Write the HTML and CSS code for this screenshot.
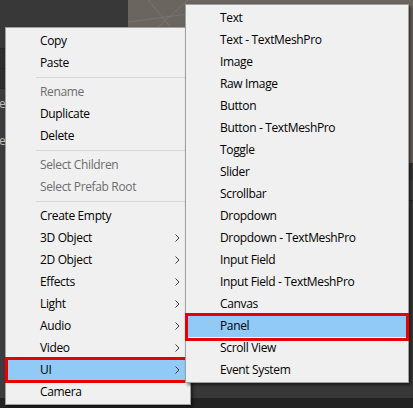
FILE: index.html
```html
<!DOCTYPE html>
<html>
<head>
<meta charset="utf-8">
<link rel="stylesheet" href="styles.css">
</head>
<body>
<div class="screen">
  <div class="hier">
    <div class="hier-head"></div>
    <div class="hier-row dark"></div>
    <div class="hier-row dark"></div>
    <div class="hier-list">
      <div class="hier-item">e</div>
      <div class="hier-item">e</div>
    </div>
  </div>
  <div class="scene">
    <svg class="grid" width="285" height="163" viewBox="0 0 285 163">
      <path d="M20 0 L45 30 M0 22 L90 10 M60 0 L30 27" stroke="#7a746e" stroke-width="1" fill="none"/>
    </svg>
  </div>
  <div class="panel">
    <div class="panel-tab"></div>
  </div>
  <div class="footer"></div>

  <div class="menu main">
    <div class="item">Copy</div>
    <div class="item">Paste</div>
    <div class="sep"></div>
    <div class="item disabled">Rename</div>
    <div class="item">Duplicate</div>
    <div class="item">Delete</div>
    <div class="sep"></div>
    <div class="item disabled">Select Children</div>
    <div class="item disabled">Select Prefab Root</div>
    <div class="sep"></div>
    <div class="item">Create Empty</div>
    <div class="item sub-arrow">3D Object<svg class="chev" width="5" height="8" viewBox="0 0 5 8"><path d="M0.5 0.5 L4 4 L0.5 7.5" fill="none" stroke="#3a3a3a" stroke-width="1"/></svg></div>
    <div class="item sub-arrow">2D Object<svg class="chev" width="5" height="8" viewBox="0 0 5 8"><path d="M0.5 0.5 L4 4 L0.5 7.5" fill="none" stroke="#3a3a3a" stroke-width="1"/></svg></div>
    <div class="item sub-arrow">Effects<svg class="chev" width="5" height="8" viewBox="0 0 5 8"><path d="M0.5 0.5 L4 4 L0.5 7.5" fill="none" stroke="#3a3a3a" stroke-width="1"/></svg></div>
    <div class="item sub-arrow">Light<svg class="chev" width="5" height="8" viewBox="0 0 5 8"><path d="M0.5 0.5 L4 4 L0.5 7.5" fill="none" stroke="#3a3a3a" stroke-width="1"/></svg></div>
    <div class="item sub-arrow">Audio<svg class="chev" width="5" height="8" viewBox="0 0 5 8"><path d="M0.5 0.5 L4 4 L0.5 7.5" fill="none" stroke="#3a3a3a" stroke-width="1"/></svg></div>
    <div class="item sub-arrow">Video<svg class="chev" width="5" height="8" viewBox="0 0 5 8"><path d="M0.5 0.5 L4 4 L0.5 7.5" fill="none" stroke="#3a3a3a" stroke-width="1"/></svg></div>
    <div class="item sub-arrow active mark-ui">UI<svg class="chev" width="5" height="8" viewBox="0 0 5 8"><path d="M0.5 0.5 L4 4 L0.5 7.5" fill="none" stroke="#3a3a3a" stroke-width="1"/></svg></div>
    <div class="item">Camera</div>
  </div>

  <div class="menu submenu">
    <div class="item">Text</div>
    <div class="item">Text - TextMeshPro</div>
    <div class="item">Image</div>
    <div class="item">Raw Image</div>
    <div class="item">Button</div>
    <div class="item">Button - TextMeshPro</div>
    <div class="item">Toggle</div>
    <div class="item">Slider</div>
    <div class="item">Scrollbar</div>
    <div class="item">Dropdown</div>
    <div class="item">Dropdown - TextMeshPro</div>
    <div class="item">Input Field</div>
    <div class="item">Input Field - TextMeshPro</div>
    <div class="item">Canvas</div>
    <div class="item active mark-panel">Panel</div>
    <div class="item">Scroll View</div>
    <div class="item">Event System</div>
  </div>
</div>
</body>
</html>
```

FILE: styles.css
```css
html, body {
  margin: 0;
  padding: 0;
  background: #222222;
}

.screen {
  position: relative;
  width: 413px;
  height: 408px;
  overflow: hidden;
  display: grid;
  grid-template-columns: 128px 1fr;
  grid-template-rows: 163px 235px 10px;
}

.hier {
  grid-column: 1;
  grid-row: 1 / 3;
  background: #3c3c3c;
  display: flex;
  flex-direction: column;
}

.hier-head {
  height: 48px;
  background: #383838;
  border-bottom: 1px solid #262626;
}

.hier-row.dark {
  height: 19px;
  background: #2e2e2e;
  border-bottom: 1px solid #262626;
}

.hier-list {
  display: flex;
  flex-direction: column;
  gap: 19px;
  padding-top: 6px;
  font: 12px "Open Sans", sans-serif;
  color: #bdbdbd;
}

.hier-item {
  height: 18px;
  line-height: 18px;
  margin-left: -1px;
}

.scene {
  grid-column: 2;
  grid-row: 1;
  background: #6b655f;
}

.grid {
  display: block;
}

.panel {
  grid-column: 2;
  grid-row: 2;
  background: #383838;
  padding-top: 17px;
}

.panel-tab {
  height: 20px;
  background: #3e3e3e;
  border-bottom: 1px solid #2a2a2a;
}

.footer {
  grid-column: 1 / 3;
  grid-row: 3;
  background: #232323;
}

.menu {
  position: absolute;
  box-sizing: border-box;
  background: #f0f0f0;
  border: 1px solid #a0a0a0;
  box-shadow: 2px 2px 3px rgba(0, 0, 0, 0.5);
  padding: 2px 0;
  font-family: "Open Sans", sans-serif;
  font-size: 12px;
  letter-spacing: -0.35px;
  color: #000000;
}

.main {
  left: 5px;
  top: 27px;
  width: 186px;
  height: 378px;
}

.submenu {
  left: 185px;
  top: 4px;
  width: 224px;
  height: 379px;
}

.item {
  position: relative;
  height: 22px;
  line-height: 22px;
  padding-left: 34px;
  white-space: nowrap;
}

.item.disabled {
  color: #6d6d6d;
}

.item.active {
  background: #91c9f7;
}

.chev {
  position: absolute;
  right: 10px;
  top: 7px;
}

.sep {
  height: 1px;
  background: #d7d7d7;
  margin: 3px 2px 3px 30px;
}

.mark-ui::after,
.mark-panel::after {
  content: "";
  position: absolute;
  border: 3px solid #e80000;
}

.mark-ui::after {
  left: -1px;
  right: 2px;
  top: -2px;
  bottom: -2px;
}

.mark-panel::after {
  left: -1px;
  right: -1px;
  top: -2px;
  bottom: -4px;
}
```
